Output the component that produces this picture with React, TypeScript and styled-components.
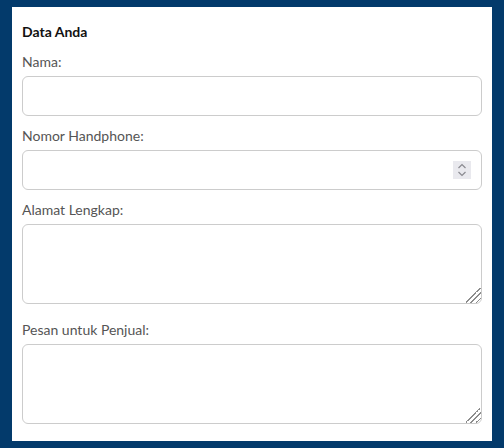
import React from "react";
import styled, { createGlobalStyle } from "styled-components";

const GlobalStyle = createGlobalStyle`
  html, body {
    margin: 0;
    padding: 0;
    background: #033a6b;
  }
  body {
    font-family: Lato, "Noto Sans", sans-serif;
  }
  * {
    box-sizing: border-box;
  }
`;

interface IFieldProps {
  label: string;
  kind: "text" | "number" | "area";
}

const SpinIcon = () => (
  <svg width="10" height="14" viewBox="0 0 10 14" fill="none">
    <path d="M1.5 5 L5 1.5 L8.5 5" stroke="#8a8a90" strokeWidth="1.2" />
    <path d="M1.5 9 L5 12.5 L8.5 9" stroke="#8a8a90" strokeWidth="1.2" />
  </svg>
);

const Field = (props: IFieldProps) => {
  const { label, kind } = props;
  return (
    <FieldWrapper>
      <Label>{label}</Label>
      {kind === "area" ? (
        <TextArea />
      ) : (
        <InputBox>
          <Input type={kind} />
          {kind === "number" && (
            <Spinner>
              <SpinIcon />
            </Spinner>
          )}
        </InputBox>
      )}
    </FieldWrapper>
  );
};

export default function App() {
  return (
    <>
      <GlobalStyle />
      <Page>
        <Card>
          <Title>Data Anda</Title>
          <Field label="Nama:" kind="text" />
          <Field label="Nomor Handphone:" kind="number" />
          <Field label="Alamat Lengkap:" kind="area" />
          <Field label="Pesan untuk Penjual:" kind="area" />
        </Card>
      </Page>
    </>
  );
}

const Page = styled.div`
  padding: 7px 12px 6px;
`;

const Card = styled.div`
  background: #ffffff;
  padding: 16px 10px 0;
  display: flex;
  flex-direction: column;
`;

const Title = styled.h3`
  margin: 0 0 13px;
  font-size: 14px;
  font-weight: 700;
  color: #111111;
  line-height: 17px;
`;

const FieldWrapper = styled.div`
  display: flex;
  flex-direction: column;
`;

const Label = styled.label`
  font-size: 14px;
  line-height: 17px;
  color: #555555;
  margin-bottom: 6px;
`;

const InputBox = styled.div`
  position: relative;
  margin: 0 0 11px;
`;

const Input = styled.input`
  display: block;
  width: 100%;
  height: 40px;
  margin: 0;
  padding: 8px 34px 8px 10px;
  border: 1px solid #cccccc;
  border-radius: 6px;
  font-family: inherit;
  font-size: 14px;
  outline: none;
  -moz-appearance: textfield;

  &::-webkit-inner-spin-button,
  &::-webkit-outer-spin-button {
    -webkit-appearance: none;
    margin: 0;
  }
`;

const Spinner = styled.span`
  position: absolute;
  top: 11px;
  right: 11px;
  width: 18px;
  height: 18px;
  background: #e9e9ee;
  display: flex;
  align-items: center;
  justify-content: center;
  pointer-events: none;
`;

const TextArea = styled.textarea`
  display: block;
  width: 100%;
  height: 80px;
  margin: 0 0 17px;
  padding: 8px 10px;
  border: 1px solid #cccccc;
  border-radius: 6px;
  font-family: inherit;
  font-size: 14px;
  outline: none;

  &::-webkit-resizer {
    background: linear-gradient(
      135deg,
      transparent 0 44%,
      #8c8c8c 44% 50%,
      transparent 50% 62%,
      #8c8c8c 62% 68%,
      transparent 68% 80%,
      #8c8c8c 80% 86%,
      transparent 86%
    );
  }
`;
